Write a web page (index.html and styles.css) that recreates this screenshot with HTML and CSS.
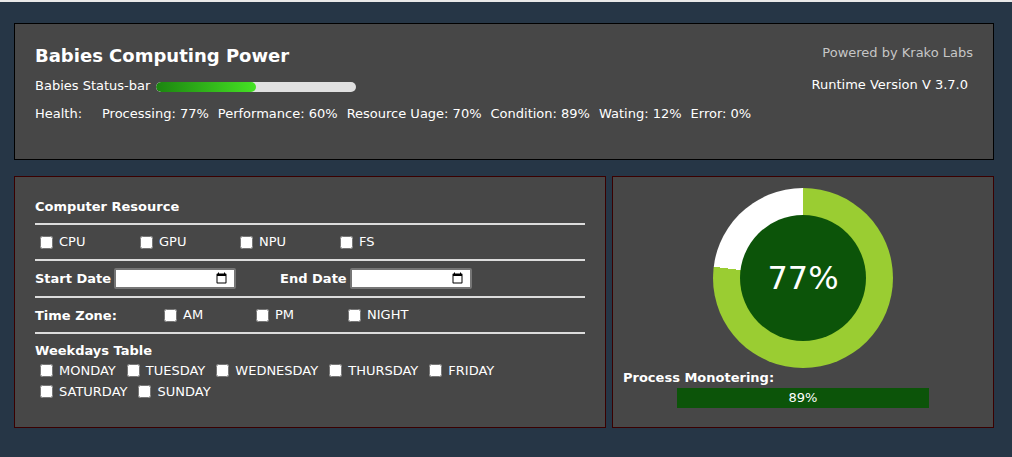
FILE: index.html
```html
<!DOCTYPE html>
<html>
<head>
<meta charset="utf-8">
<link rel="stylesheet" href="styles.css">
</head>
<body>
<div class="page">
  <header class="header">
    <div class="header-left">
      <h1 class="title">Babies Computing Power</h1>
      <div class="status-row">
        <span>Babies Status-bar</span>
        <div class="status-bar"><div class="status-fill" style="width:50%"></div></div>
      </div>
      <div class="health-row">
        <span class="health-label">Health:</span>
        <span class="health-item">Processing: 77%</span>
        <span class="health-item">Performance: 60%</span>
        <span class="health-item">Resource Uage: 70%</span>
        <span class="health-item">Condition: 89%</span>
        <span class="health-item">Wating: 12%</span>
        <span class="health-item">Error: 0%</span>
      </div>
    </div>
    <div class="header-right">
      <div class="powered">Powered by Krako Labs</div>
      <div class="version">Runtime Version V 3.7.0</div>
    </div>
  </header>

  <div class="panels">
    <section class="panel panel-left">
      <div class="section-title">Computer Resource</div>
      <hr class="rule rule-first">
      <div class="row">
        <label class="cb-item w100"><input type="checkbox"><span>CPU</span></label>
        <label class="cb-item w100"><input type="checkbox"><span>GPU</span></label>
        <label class="cb-item w100"><input type="checkbox"><span>NPU</span></label>
        <label class="cb-item w100"><input type="checkbox"><span>FS</span></label>
      </div>
      <hr class="rule">
      <div class="row row-tall">
        <span class="bold-label">Start Date</span>
        <input type="date" class="date-input">
        <span class="bold-label end-label">End Date</span>
        <input type="date" class="date-input">
      </div>
      <hr class="rule">
      <div class="row">
        <span class="bold-label tz-label">Time Zone:</span>
        <label class="cb-item w92"><input type="checkbox"><span>AM</span></label>
        <label class="cb-item w92"><input type="checkbox"><span>PM</span></label>
        <label class="cb-item"><input type="checkbox"><span>NIGHT</span></label>
      </div>
      <hr class="rule">
      <div class="section-title weekdays-title">Weekdays Table</div>
      <div class="day-row">
        <label class="cb-item"><input type="checkbox"><span>MONDAY</span></label>
        <label class="cb-item"><input type="checkbox"><span>TUESDAY</span></label>
        <label class="cb-item"><input type="checkbox"><span>WEDNESDAY</span></label>
        <label class="cb-item"><input type="checkbox"><span>THURSDAY</span></label>
        <label class="cb-item"><input type="checkbox"><span>FRIDAY</span></label>
      </div>
      <div class="day-row">
        <label class="cb-item"><input type="checkbox"><span>SATURDAY</span></label>
        <label class="cb-item"><input type="checkbox"><span>SUNDAY</span></label>
      </div>
    </section>

    <section class="panel panel-right">
      <div class="donut">
        <div class="donut-inner">77%</div>
      </div>
      <div class="monitor-title">Process Monotering:</div>
      <div class="monitor-bar">89%</div>
    </section>
  </div>
</div>
</body>
</html>
```

FILE: styles.css
```css
* { box-sizing: border-box; }

html, body {
  margin: 0;
  padding: 0;
}

body {
  background: #263646;
  border-top: 2px solid #e9e9e9;
  font-family: "DejaVu Sans", Verdana, sans-serif;
  font-size: 13px;
  color: #ffffff;
  min-height: 457px;
}

.page {
  padding: 21px 18px 0 14px;
}

.header {
  display: flex;
  justify-content: space-between;
  height: 137px;
  background: #474747;
  border: 1px solid #000;
  padding: 21px 20px 0 20px;
}

.title {
  margin: 0;
  font-size: 18px;
  line-height: 22px;
  font-weight: bold;
}

.status-row {
  display: flex;
  align-items: center;
  margin-top: 10px;
  height: 18px;
  line-height: 18px;
}

.status-bar {
  width: 200px;
  height: 10px;
  margin-left: 6px;
  margin-top: 1px;
  background: #e0e0e0;
  border-radius: 5px;
  overflow: hidden;
}

.status-fill {
  height: 100%;
  border-radius: 5px;
  background: linear-gradient(to right, #1c8410, #45e224);
}

.health-row {
  display: flex;
  margin-top: 10px;
  line-height: 18px;
}

.health-label {
  width: 67px;
}

.health-item {
  margin-right: 9px;
  white-space: nowrap;
}

.header-right {
  display: flex;
  flex-direction: column;
  align-items: flex-end;
}

.powered {
  color: #c6c6c6;
  line-height: 18px;
  margin-top: -1px;
}

.version {
  margin-top: 14px;
  margin-right: 5px;
  line-height: 18px;
}

.panels {
  display: flex;
  gap: 6px;
  margin-top: 16px;
}

.panel {
  background: #474747;
  border: 1px solid #3a0000;
  height: 252px;
}

.panel-left {
  width: 592px;
  padding: 21px 20px 0 20px;
}

.panel-right {
  flex: 1;
  padding: 11px 10px 0 10px;
  display: flex;
  flex-direction: column;
  align-items: center;
}

.section-title {
  font-weight: bold;
  line-height: 18px;
}

.rule {
  margin: 0;
  border: 0;
  height: 2px;
  background: #dcdcdc;
}

.rule-first {
  margin-top: 7px;
}

.row {
  display: flex;
  align-items: center;
  height: 34px;
}

.row-tall {
  height: 35px;
}

.cb-item {
  display: flex;
  align-items: center;
  line-height: 18px;
}

.cb-item input {
  margin: 0 6px 0 5px;
  width: 13px;
  height: 13px;
}

.w100 { width: 100px; }
.w92 { width: 92px; }

.bold-label {
  font-weight: bold;
}

.tz-label {
  width: 124px;
}

.date-input {
  width: 122px;
  height: 21px;
  margin-left: 3px;
  font-size: 13px;
  padding: 0 4px;
  border: 2px solid #767676;
  border-radius: 2px;
  background: #fff;
  color: transparent;
}

.date-input::-webkit-datetime-edit {
  color: transparent;
}

.end-label {
  margin-left: 44px;
}

.weekdays-title {
  margin-top: 8px;
}

.day-row {
  display: flex;
  gap: 6px;
  height: 21px;
  align-items: center;
}

.donut {
  width: 180px;
  height: 180px;
  border-radius: 50%;
  background: conic-gradient(#9acd32 0 77%, #ffffff 77% 100%);
  display: flex;
  align-items: center;
  justify-content: center;
}

.donut-inner {
  width: 126px;
  height: 126px;
  border-radius: 50%;
  background: #0c5409;
  display: flex;
  align-items: center;
  justify-content: center;
  font-size: 32px;
  color: #fff;
}

.monitor-title {
  align-self: flex-start;
  font-weight: bold;
  line-height: 18px;
  margin-top: 1px;
}

.monitor-bar {
  width: 252px;
  height: 20px;
  margin-top: 1px;
  background: #0c5409;
  text-align: center;
  line-height: 20px;
}
```
